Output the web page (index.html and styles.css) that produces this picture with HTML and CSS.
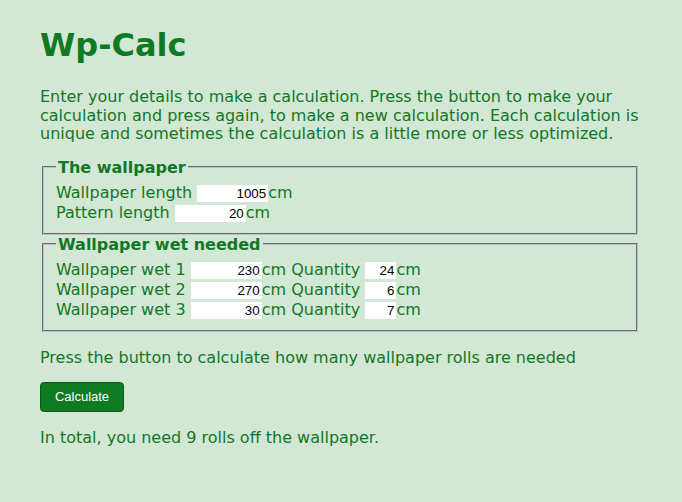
FILE: index.html
```html
<!DOCTYPE html>
<html>
<head>
<meta charset="utf-8">
<title>Wp-Calc</title>
<link rel="stylesheet" href="styles.css">
</head>
<body>
<div class="page">
  <h1 class="title">Wp-Calc</h1>
  <p class="intro">Enter your details to make a calculation. Press the button to make your calculation and press again, to make a new calculation. Each calculation is unique and sometimes the calculation is a little more or less optimized.</p>
  <fieldset class="group">
    <legend class="legend">The wallpaper</legend>
    <div class="row">Wallpaper length <input class="num wide" type="text" value="1005">cm</div>
    <div class="row">Pattern length <input class="num wide" type="text" value="20">cm</div>
  </fieldset>
  <fieldset class="group group-second">
    <legend class="legend">Wallpaper wet needed</legend>
    <div class="row">Wallpaper wet 1 <input class="num wide" type="text" value="230">cm Quantity <input class="num narrow" type="text" value="24">cm</div>
    <div class="row">Wallpaper wet 2 <input class="num wide" type="text" value="270">cm Quantity <input class="num narrow" type="text" value="6">cm</div>
    <div class="row">Wallpaper wet 3 <input class="num wide" type="text" value="30">cm Quantity <input class="num narrow" type="text" value="7">cm</div>
  </fieldset>
  <p class="hint">Press the button to calculate how many wallpaper rolls are needed</p>
  <button class="calc" type="button">Calculate</button>
  <p class="result">In total, you need 9 rolls off the wallpaper.</p>
</div>
</body>
</html>
```

FILE: styles.css
```css
html, body {
  margin: 0;
  padding: 0;
}
body {
  background: #d2e8d4;
  color: #127627;
  font-family: "DejaVu Sans", Verdana, sans-serif;
  font-size: 16px;
}
.page {
  width: 600px;
  padding: 0 40px;
  overflow: hidden;
}
.title {
  font-size: 32px;
  font-weight: bold;
  color: #0f7a23;
  margin: 27px 0 0;
  line-height: 37px;
}
.intro {
  margin: 24px 0 0;
  line-height: 18.6px;
}
.group {
  margin: 14px 2px 0;
  padding: 6px 12px 10px;
  border: 2px groove rgb(192,192,192);
}
.group-second {
  margin-top: 0;
}
.legend {
  font-weight: bold;
  font-size: 16px;
  padding: 0 2px;
}
.row {
  height: 20px;
  line-height: 20px;
}
.num {
  font-family: "Liberation Sans", Arial, sans-serif;
  font-size: 13.33px;
  color: #000;
  background: #fff;
  border: 0;
  padding: 0 2px 0 1px;
  margin: 0;
  height: 17px;
  text-align: right;
  vertical-align: baseline;
  box-sizing: border-box;
}
.wide {
  width: 71px;
}
.narrow {
  width: 31px;
}
.hint {
  margin: 16px 0 0;
}
.calc {
  margin-top: 15px;
  background: #0e7a22;
  color: #fff;
  border: 1px solid #0a5a18;
  border-radius: 4px;
  font-family: "Liberation Sans", Arial, sans-serif;
  font-size: 13px;
  width: 84px;
  height: 30px;
  padding: 0;
}
.result {
  margin: 16px 0 0;
}
```
